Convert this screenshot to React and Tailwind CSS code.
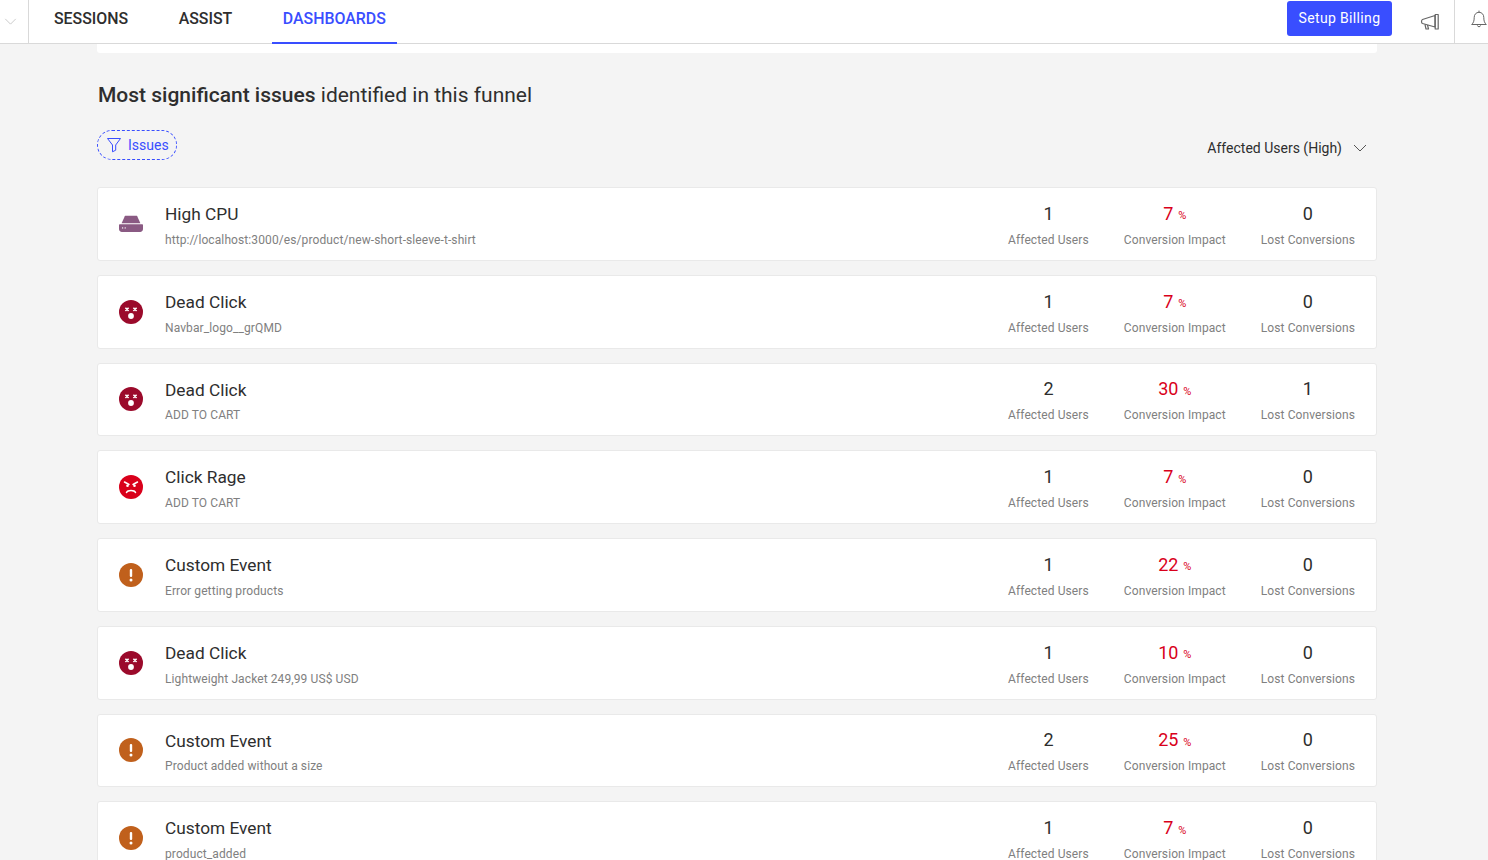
import React from 'react';

const issues = [
  { type: 'cpu', title: 'High CPU', sub: 'http://localhost:3000/es/product/new-short-sleeve-t-shirt', users: 1, impact: 7, lost: 0 },
  { type: 'dead', title: 'Dead Click', sub: 'Navbar_logo__grQMD', users: 1, impact: 7, lost: 0 },
  { type: 'dead', title: 'Dead Click', sub: 'ADD TO CART', users: 2, impact: 30, lost: 1 },
  { type: 'rage', title: 'Click Rage', sub: 'ADD TO CART', users: 1, impact: 7, lost: 0 },
  { type: 'custom', title: 'Custom Event', sub: 'Error getting products', users: 1, impact: 22, lost: 0 },
  { type: 'dead', title: 'Dead Click', sub: 'Lightweight Jacket 249,99 US$ USD', users: 1, impact: 10, lost: 0 },
  { type: 'custom', title: 'Custom Event', sub: 'Product added without a size', users: 2, impact: 25, lost: 0 },
  { type: 'custom', title: 'Custom Event', sub: 'product_added', users: 1, impact: 7, lost: 0 },
];

const Chevron = ({ className }) => (
  <svg viewBox="0 0 14 8" fill="none" stroke="currentColor" strokeWidth="1" className={className}>
    <path d="M1 1l6 6 6-6" />
  </svg>
);

const Megaphone = () => (
  <svg viewBox="0 0 20 18" fill="none" stroke="#666" strokeWidth="1.2" className="w-5 h-[18px]">
    <path d="M2.5 6.5L15 2.5V14L2.5 10.5C1.2 10 1.2 7 2.5 6.5Z" strokeLinejoin="round" />
    <path d="M15.2 1.5h3v14.5h-3z" strokeLinejoin="round" />
    <path d="M5 11.5l1 4.5h2.5l-1-4" strokeLinejoin="round" />
  </svg>
);

const BellIcon = () => (
  <svg viewBox="0 0 16 18" fill="none" stroke="#666" strokeWidth="1" className="w-4 h-[18px]">
    <path d="M8 2.3c-2.9 0-4.8 2.2-4.8 5.2 0 3.6-.8 5.4-2.5 7h14.6c-1.7-1.6-2.5-3.4-2.5-7 0-3-1.9-5.2-4.8-5.2z" strokeLinejoin="round" />
    <path d="M8 .6v1.7" />
    <path d="M6.4 15.4c.2 1.8 3 1.8 3.2 0" />
  </svg>
);

const FunnelIcon = () => (
  <svg viewBox="0 0 16 16" fill="none" stroke="#394eff" strokeWidth="1" className="w-4 h-4">
    <path d="M1.5 1.5h13L9.7 8v5.2l-3.2 1.6V8z" strokeLinejoin="round" />
  </svg>
);

const IssueIcon = ({ type }) => {
  if (type === 'cpu') {
    return (
      <svg viewBox="0 0 24 24" className="w-6 h-6">
        <path d="M2.6 11.2L5.8 4.3c.2-.4.5-.5.9-.5h10.6c.4 0 .7.1.9.5l3.2 6.9z" fill="#8a5a83" />
        <path d="M1 12.2h22c.6 0 1 .4 1 1v3.9c0 1.7-1.2 2.9-2.9 2.9H2.9C1.2 20 0 18.8 0 17.1v-3.9c0-.6.4-1 1-1z" fill="#8a5a83" />
        <circle cx="3.6" cy="15.9" r=".7" fill="#fff" />
        <circle cx="6.2" cy="15.9" r=".7" fill="#fff" />
      </svg>
    );
  }
  if (type === 'dead') {
    return (
      <svg viewBox="0 0 24 24" className="w-6 h-6">
        <circle cx="12" cy="12" r="12" fill="#9b0a2b" />
        <path d="M6.4 7.7l3.2 3.2m0-3.2l-3.2 3.2M14.4 7.7l3.2 3.2m0-3.2l-3.2 3.2" stroke="#fff" strokeWidth="1.6" />
        <circle cx="12" cy="16" r="2.9" fill="#fff" />
      </svg>
    );
  }
  if (type === 'rage') {
    return (
      <svg viewBox="0 0 24 24" className="w-6 h-6">
        <circle cx="12" cy="12" r="12" fill="#d9001b" />
        <path d="M5.5 7l4.5 2.5M18.5 7L14 9.5" stroke="#fff" strokeWidth="1.5" strokeLinecap="round" />
        <circle cx="8.5" cy="10.8" r="1.3" fill="#fff" />
        <circle cx="15.5" cy="10.8" r="1.3" fill="#fff" />
        <path d="M7.5 17.5c1.3-2.6 7.7-2.6 9 0" fill="none" stroke="#fff" strokeWidth="1.5" strokeLinecap="round" />
      </svg>
    );
  }
  return (
    <svg viewBox="0 0 24 24" className="w-6 h-6">
      <circle cx="12" cy="12" r="12" fill="#c0601c" />
      <rect x="10.8" y="6" width="2.4" height="8" rx="1.1" fill="#fff" />
      <circle cx="12" cy="17" r="1.5" fill="#fff" />
    </svg>
  );
};

const Stat = ({ value, label, red }) => (
  <div className="flex flex-col items-center pt-[2px]">
    <div className={`h-[26px] flex items-center leading-none ${red ? 'text-[#d9001b]' : 'text-[#2e2e2e]'}`}>
      <span className="text-[18px]">{value}</span>
      {red && <span className="text-[11px] ml-[5px] mt-[4px]">%</span>}
    </div>
    <div className="text-[12px] tracking-[0.1px] text-[#808080] mt-1">{label}</div>
  </div>
);

const IssueRow = ({ issue }) => (
  <div className="h-[73.75px] shrink-0 bg-white border border-[#e9e9e9] rounded-[3px] flex items-center pl-[21px] pr-[21px]">
    <IssueIcon type={issue.type} />
    <div className="ml-[22px] flex-1 min-w-0 pt-[3px]">
      <div className="h-[26px] flex items-center text-[17.3px] text-[#2e2e2e] leading-none">{issue.title}</div>
      <div className="text-[12px] tracking-[0.1px] text-[#808080] mt-[3px]">{issue.sub}</div>
    </div>
    <div className="flex gap-[35px]">
      <Stat value={issue.users} label="Affected Users" />
      <Stat value={issue.impact} label="Conversion Impact" red />
      <Stat value={issue.lost} label="Lost Conversions" />
    </div>
  </div>
);

const Tab = ({ label, active }) => (
  <div className={`h-full px-[11px] pb-[5px] flex items-center text-[15.9px] font-medium border-b-2 ${active ? 'text-[#394eff] border-[#394eff]' : 'text-[#2e2e2e] border-transparent'}`}>
    {label}
  </div>
);

export default function App() {
  return (
    <div className="h-screen overflow-hidden bg-[#f4f4f4] font-['Roboto',sans-serif]">
      <header className="h-[44px] bg-white border-b border-[#d9d9d9] flex items-stretch">
        <div className="w-[29px] border-r border-[#d9d9d9] flex items-center pl-[4px] text-[#c4c4c4]">
          <Chevron className="w-[13px] h-[7px]" />
        </div>
        <nav className="flex items-center h-[44px] ml-[14px] gap-[28.5px]">
          <Tab label="SESSIONS" />
          <Tab label="ASSIST" />
          <Tab label="DASHBOARDS" active />
        </nav>
        <div className="flex-1" />
        <div className="flex items-start pt-px">
          <button className="w-[105px] h-[35px] bg-[#394eff] text-white text-[14px] tracking-[0.35px] rounded-[3px]">Setup Billing</button>
        </div>
        <div className="w-[63px] flex items-center justify-end pr-[14px] border-r border-[#d9d9d9]">
          <Megaphone />
        </div>
        <div className="w-[33px] flex items-center justify-end pr-px pb-[5px]">
          <BellIcon />
        </div>
      </header>
      <main className="w-[1280px] ml-[97px]">
        <div className="h-[9px] bg-white rounded-b-[3px]" />
        <h2 className="mt-[29px] pl-px text-[21px] leading-[26px] text-[#2e2e2e]">
          <span className="font-medium">Most significant issues</span> identified in this funnel
        </h2>
        <div className="mt-[22px] h-[30px] flex items-center justify-between">
          <div className="w-[80px] h-[30px] flex items-center pl-2 gap-[6px] border border-dashed border-[#394eff] rounded-[15px] text-[14px] text-[#394eff]">
            <FunnelIcon />
            <span>Issues</span>
          </div>
          <div className="flex items-center text-[14px] text-[#2e2e2e] mt-[6px] pr-[10px]">
            <span>Affected Users (High)</span>
            <Chevron className="w-[14px] h-2 ml-[11px] text-[#555]" />
          </div>
        </div>
        <div className="mt-[27px] flex flex-col gap-[14px]">
          {issues.map((issue, i) => (
            <IssueRow key={i} issue={issue} />
          ))}
        </div>
      </main>
    </div>
  );
}
